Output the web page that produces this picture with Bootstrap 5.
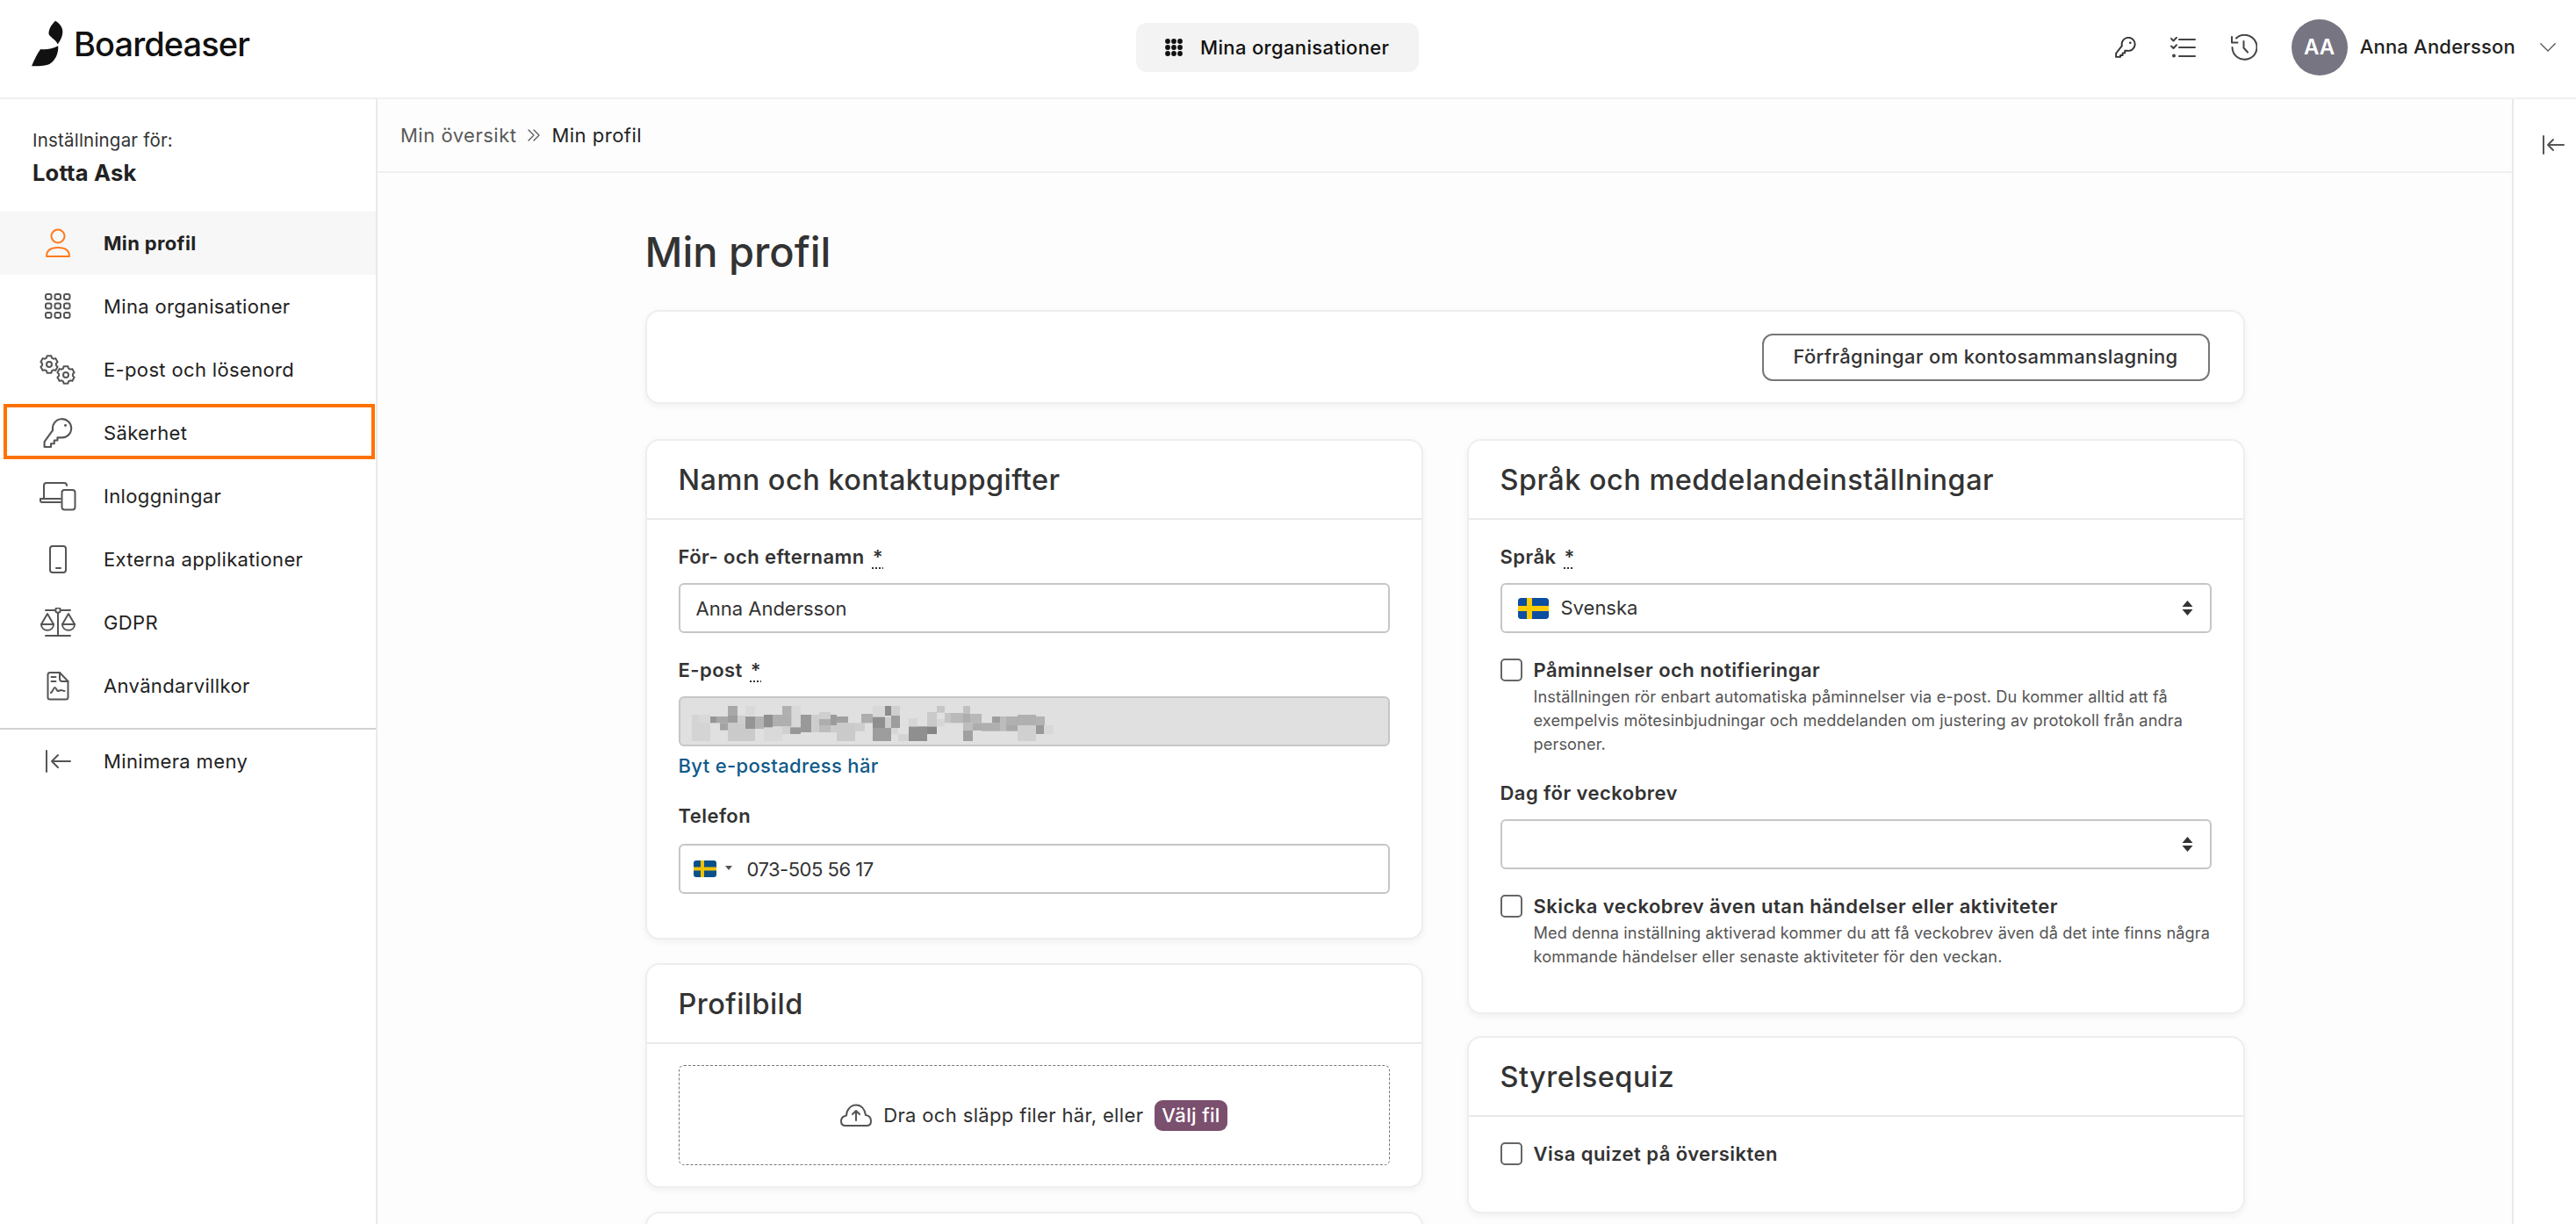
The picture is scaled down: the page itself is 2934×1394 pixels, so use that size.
<!DOCTYPE html>
<html lang="sv">
<head>
<meta charset="utf-8">
<title>Min profil</title>
<link href="https://cdn.jsdelivr.net/npm/bootstrap@5.3.0/dist/css/bootstrap.min.css" rel="stylesheet">
<style>
html,body{height:100%;overflow:hidden}
body{font-family:Inter,"Noto Sans",sans-serif;font-size:22px;color:#2f2f2f;background:#fff;letter-spacing:.35px}
.app-top{height:113px;border-bottom:2px solid #f0f0f0;background:#fff;flex:none}
.brand-box{flex:0 0 1294px;padding:0 0 12px 35px;gap:11px}
.brand-name{font-size:38px;font-weight:500;letter-spacing:-.9px;color:#111;line-height:1}
.org-btn{width:322px;height:56px;background:#f3f3f3;border:0;border-radius:12px;font-size:22px;font-weight:500;color:#111;gap:20px;padding:0 0 0 33px;margin-top:-3px;letter-spacing:.35px}
.top-tools{margin-left:auto;padding:0 23px 4px 0;height:100%}
.tool-ico{display:block;color:#333}
.avatar-dot{width:64px;height:64px;border-radius:50%;background:#787582;color:#fff;font-weight:600;font-size:24px;letter-spacing:0}
.user-name{font-weight:500;font-size:22px;color:#222;margin-left:14px;margin-right:28px;letter-spacing:.2px}
.side-nav{width:430px;flex:none;border-right:2px solid #e9e9e9;background:#fff}
.side-head{padding:32px 0 0 37px;height:128px}
.side-sub{font-size:20.5px;line-height:30px;color:#333;letter-spacing:.2px}
.side-who{font-size:25.5px;font-weight:700;line-height:36px;margin-top:4px;color:#222;letter-spacing:.2px}
.side-link{position:relative;height:72px;color:#222;text-decoration:none;padding:0}
.side-link .ico-slot{width:118px;flex:none;display:flex;justify-content:center;padding-left:14px}
.side-link.is-current{background:#f7f7f7;font-weight:700}
.side-link.is-focus::after{content:"";position:absolute;left:4px;right:1px;top:3px;height:63px;border:4px solid #ff7200;pointer-events:none}
.side-rule{margin:12px 0 0;border:0;border-top:2px solid #d2d2d2;opacity:1}
.ico{fill:none;stroke:#555;stroke-width:2;stroke-linecap:round;stroke-linejoin:round}
.main-area{background:#fdfdfd;min-width:0}
.crumb-bar{height:84px;border-bottom:2px solid #f0f0f0;padding-left:26px;flex:none;letter-spacing:.5px}
.crumb-bar .breadcrumb{margin:0}
.crumb-muted{color:#5a5a5a}
.crumb-sep{margin:0 13px;display:flex}
.crumb-now{color:#222}
.page-wrap{width:1822px;margin:0 auto}
.page-title{font-size:47px;font-weight:500;line-height:60px;margin:60px 0 36px;color:#333;letter-spacing:0}
.soft-card{border:2px solid #eeeeee;border-radius:16px;box-shadow:0 3px 8px rgba(0,0,0,.05);background:#fff;--bs-card-bg:#fff}
.top-strip{height:107px;padding-right:38px;margin-bottom:40px}
.merge-btn{height:54px;width:510px;border:2px solid #777;border-radius:12px;background:#fff;color:#333;font-size:22px;font-weight:500;padding:0;letter-spacing:.35px}
.two-col{--bs-gutter-x:50px}
.soft-card .card-header{height:90px;background:#fff;border-bottom:2px solid #e9e9e9;padding:0 36px;display:flex;align-items:center;border-radius:16px 16px 0 0}
.card-ttl{font-size:32.5px;font-weight:500;margin:0;color:#333;line-height:1.2;letter-spacing:.45px}
.soft-card .card-body{padding:27px 36px 50px}
.stack-gap{margin-bottom:27px}
.form-label{font-weight:600;line-height:30px;margin-bottom:15px;color:#333;display:block;letter-spacing:.45px}
.form-label.phone-lbl{margin-bottom:17px}
.req-mark{text-decoration:underline dotted;text-underline-offset:4px;margin-left:3px}
.form-control,.form-select{height:57px;font-size:22px;color:#333;border:2px solid #c6c6c6;border-radius:6px;padding:0 18px;background-color:#fff}
.form-select{background-image:url("data:image/svg+xml,%3csvg xmlns='http://www.w3.org/2000/svg' viewBox='0 0 13 17'%3e%3cpath fill='%23333' d='M6.500 0l6 7H.5zM6.500 17l6-7H.5z'/%3e%3c/svg%3e");background-position:right 19px center;background-size:13px 17px}
.form-select.flag-pad{padding-left:67px}
.form-control.phone-pad{padding-left:76px;letter-spacing:-.5px}
.mail-locked,.mail-locked:disabled{background:#e0e0e0;border-color:#c6c6c6;opacity:1}
.mosaic-veil{position:absolute;left:7px;top:2px;pointer-events:none}
.flag-over{position:absolute;pointer-events:none;border-radius:3px}
.change-link{display:block;color:#0f5a8a;text-decoration:none;line-height:30px;margin-top:7px;font-weight:500}
.caret-mini{position:absolute;left:53px;top:25px;width:0;height:0;border-left:4px solid transparent;border-right:4px solid transparent;border-top:5px solid #555}
.tick-row{display:flex;gap:13px;min-height:30px}
.form-check-input.tick-box{width:25px;height:26px;border:2px solid #666;border-radius:5px;margin:2px 0 0;flex:none;box-shadow:none}
.tick-lbl{font-weight:600;line-height:30px;color:#333;letter-spacing:.45px}
.tick-note{font-size:18.2px;line-height:27px;color:#555;margin:2px 0 0;letter-spacing:.1px}
.drop-zone{height:114px;border:1px dashed #777;border-radius:6px;gap:13px}
.pick-file{background:#7b4f6e;color:#fff;border-radius:9px;padding:0 8px;height:35px;font-weight:500;line-height:35px}
.rail-right{width:73px;flex:none;border-left:2px solid #e9e9e9;background:#fff;padding:41px 0 0 18px}
.body-row{min-height:0}
.spare-card{height:200px}
.side-gap-a{margin-bottom:27px}
.side-gap-b{margin-bottom:25px}
.tools-key{margin-right:38px}
.tools-list{margin-right:40px}
.tools-hist{margin-right:39px}
.drop-body{padding-top:24px!important;padding-bottom:24px!important}
.quiz-body{padding-bottom:51px!important}
.ico-dark{stroke:#333;stroke-width:2.6}
.ico-mid{stroke:#444}
.ico-thin{stroke-width:1.3}
.ico-orange{stroke:#ff7a1a}
.flag-phone{left:17px;top:19px}
.flag-lang{left:20px;top:17px}
</style>
</head>
<body class="d-flex flex-column">

<header class="app-top d-flex align-items-center">
  <div class="brand-box d-flex align-items-center">
    <svg width="38" height="55" viewBox="102 58 112 160" aria-hidden="true" fill="#111">
      <path d="M185 62C170 75 160 95 163 108 170 120 190 128 192 141 205 125 212 105 208 90 205 78 195 68 185 62Z"/>
      <path d="M105 214C115 190 125 170 135 157 155 160 175 155 194 146 196 170 185 195 165 207 150 214 125 214 105 214Z"/>
    </svg>
    <span class="brand-name">Boardeaser</span>
  </div>
  <button type="button" class="btn org-btn d-flex align-items-center">
    <svg width="20" height="20" viewBox="0 0 20 20" fill="#111" aria-hidden="true"><circle cx="3" cy="3" r="2.9"/><circle cx="10" cy="3" r="2.9"/><circle cx="17" cy="3" r="2.9"/><circle cx="3" cy="10" r="2.9"/><circle cx="10" cy="10" r="2.9"/><circle cx="17" cy="10" r="2.9"/><circle cx="3" cy="17" r="2.9"/><circle cx="10" cy="17" r="2.9"/><circle cx="17" cy="17" r="2.9"/></svg>
    <span>Mina organisationer</span>
  </button>
  <div class="top-tools d-flex align-items-center">
    <svg class="tool-ico tools-key" width="24" height="24" viewBox="0 0 32 32" aria-hidden="true"><path class="ico ico-dark" d="M10.5 13.5A10 10 0 1 1 18.5 21H15v3.5h-3.5V28H8v2.5H1.500V25Z"/><circle cx="23" cy="9" r="1.700" fill="#333"/></svg>
    <svg class="tool-ico tools-list" width="30" height="24" viewBox="0 0 30 24" aria-hidden="true"><path class="ico ico-mid" d="M11 3h18M11 12h18M11 22h18M2 2l2.500 2.500L8 0.800M2 10.500l2.500 2.500L8 9.300"/><circle cx="5" cy="21.500" r="2" fill="#444"/></svg>
    <svg class="tool-ico tools-hist" width="30" height="30" viewBox="0 0 30 30" aria-hidden="true"><path class="ico ico-mid" d="M6 4.500A14 14 0 1 1 1.500 15M1 3v6.500h6.500M14.500 8v7.500l4.500 5"/></svg>
    <div class="avatar-dot d-flex align-items-center justify-content-center">AA</div>
    <span class="user-name">Anna Andersson</span>
    <svg width="18" height="10" viewBox="0 0 18 10" aria-hidden="true"><path class="ico ico-thin" d="M.8.800 9 9 17.200.800"/></svg>
  </div>
</header>

<div class="d-flex flex-grow-1 body-row overflow-hidden">
  <nav class="side-nav">
    <div class="side-head">
      <div class="side-sub">Inställningar för:</div>
      <div class="side-who">Lotta Ask</div>
    </div>
    <div class="d-flex flex-column">
      <a href="#" class="side-link is-current d-flex align-items-center"><span class="ico-slot"><svg width="30" height="34" viewBox="0 0 30 34" aria-hidden="true"><g class="ico ico-orange"><circle cx="15" cy="9" r="7.500"/><path d="M2 32c0-7 5-10 13-10s13 3 13 10Z"/></g></svg></span>Min profil</a>
      <a href="#" class="side-link d-flex align-items-center"><span class="ico-slot"><svg width="30" height="30" viewBox="0 0 30 30" aria-hidden="true"><g class="ico"><rect x="1" y="1" width="6.500" height="6" rx="2"/><rect x="11.500" y="1" width="6.500" height="6" rx="2"/><rect x="22" y="1" width="6.500" height="6" rx="2"/><rect x="1" y="11.500" width="6.500" height="6" rx="2"/><rect x="11.500" y="11.500" width="6.500" height="6" rx="2"/><rect x="22" y="11.500" width="6.500" height="6" rx="2"/><rect x="1" y="22" width="6.500" height="6" rx="2"/><rect x="11.500" y="22" width="6.500" height="6" rx="2"/><rect x="22" y="22" width="6.500" height="6" rx="2"/></g></svg></span>Mina organisationer</a>
      <a href="#" class="side-link d-flex align-items-center"><span class="ico-slot"><svg width="42" height="36" viewBox="0 0 42 36" aria-hidden="true"><defs><g id="cog"><polygon points="-2.400,-9.700 2.400,-9.700 3,-7.400 4.900,-6.300 7.200,-6.900 9.600,-2.800 7.900,-1.100 7.900,1.100 9.600,2.800 7.200,6.900 4.900,6.300 3,7.400 2.400,9.700 -2.400,9.700 -3,7.400 -4.900,6.300 -7.200,6.900 -9.600,2.800 -7.900,1.100 -7.900,-1.100 -9.600,-2.800 -7.200,-6.900 -4.900,-6.300 -3,-7.400"/><circle r="3"/></g></defs><g class="ico"><use href="#cog" transform="translate(11 12)"/><use href="#cog" transform="translate(30 24)"/></g></svg></span>E-post och lösenord</a>
      <a href="#" class="side-link is-focus d-flex align-items-center"><span class="ico-slot"><svg width="34" height="34" viewBox="0 0 32 32" aria-hidden="true"><path class="ico" d="M10.500 13A10 10 0 1 1 19 21H15.500v3H12v3.500H8.500V31H1.500V25.500Z"/><circle cx="24" cy="8" r="1.400" fill="#555"/></svg></span>Säkerhet</a>
      <a href="#" class="side-link d-flex align-items-center"><span class="ico-slot"><svg width="42" height="34" viewBox="0 0 42 34" aria-hidden="true"><g class="ico"><path d="M5 20V5q0-3 3-3h20q3 0 3 3"/><path d="M24 24H3q-2 0-2-2v-2h23"/><rect x="25.500" y="10" width="15" height="22.500" rx="3"/></g></svg></span>Inloggningar</a>
      <a href="#" class="side-link d-flex align-items-center"><span class="ico-slot"><svg width="22" height="34" viewBox="0 0 22 34" aria-hidden="true"><g class="ico"><rect x="2" y="2" width="18" height="30" rx="3"/><path d="M9 27h5"/></g></svg></span>Externa applikationer</a>
      <a href="#" class="side-link d-flex align-items-center"><span class="ico-slot"><svg width="42" height="34" viewBox="0 0 42 34" aria-hidden="true"><g class="ico"><path d="M7 3h10M25 3h10M21 6v26M7 32h28"/><circle cx="21" cy="3" r="2.800"/><path d="M9 7 2 19h14ZM33 7l-7 12h14Z"/><path d="M2 19c0 9 14 9 14 0M26 19c0 9 14 9 14 0"/></g></svg></span>GDPR</a>
      <a href="#" class="side-link d-flex align-items-center"><span class="ico-slot"><svg width="26" height="34" viewBox="0 0 26 34" aria-hidden="true"><g class="ico"><path d="M15 2H4Q1.500 2 1.500 4.500v26q0 2 2.500 2h18q2.500 0 2.500-2.500V12Z"/><path d="M15 2v7q0 3 3 3h6.500M5.500 7h5M5.500 12h5M5 25c2-1 3-6 4.500-6s2 4 3.500 4 2-1 3.500-1 2 1 4 1"/></g></svg></span>Användarvillkor</a>
    </div>
    <hr class="side-rule">
    <a href="#" class="side-link d-flex align-items-center"><span class="ico-slot"><svg width="30" height="26" viewBox="0 0 30 26" aria-hidden="true"><path class="ico" d="M2 1v24M29 13H8M15 6l-7 7 7 7"/></svg></span>Minimera meny</a>
  </nav>

  <main class="main-area flex-grow-1 d-flex flex-column overflow-hidden">
    <div class="crumb-bar d-flex align-items-center">
      <ol class="breadcrumb align-items-center">
        <li class="crumb-muted">Min översikt</li>
        <li class="crumb-sep"><svg width="14" height="14" viewBox="0 0 14 14" aria-hidden="true"><path class="ico ico-thin" d="M1 1l6 6-6 6M7 1l6 6-6 6"/></svg></li>
        <li class="crumb-now">Min profil</li>
      </ol>
    </div>
    <div class="page-wrap">
      <h1 class="page-title">Min profil</h1>
      <div class="card soft-card top-strip d-flex flex-row align-items-center justify-content-end">
        <button type="button" class="btn merge-btn">Förfrågningar om kontosammanslagning</button>
      </div>
      <div class="row two-col">
        <div class="col-6">
          <div class="card soft-card side-gap-a">
            <div class="card-header"><h2 class="card-ttl">Namn och kontaktuppgifter</h2></div>
            <div class="card-body">
              <div class="stack-gap">
                <label class="form-label">För- och efternamn <span class="req-mark">*</span></label>
                <input class="form-control" value="Anna Andersson">
              </div>
              <div class="stack-gap">
                <label class="form-label">E-post <span class="req-mark">*</span></label>
                <div class="position-relative">
                  <input class="form-control mail-locked" disabled>
                  <svg class="mosaic-veil" width="430" height="55" viewBox="0 0 1290 165" aria-hidden="true">
                    <rect x="24" y="57" width="63" height="90" fill="#d4d4d4"/><rect x="48" y="57" width="39" height="28" fill="#d9d9d9"/><rect x="87" y="63" width="21" height="22" fill="#959595"/><rect x="108" y="63" width="39" height="22" fill="#a8a8a8"/><rect x="120" y="85" width="27" height="25" fill="#a3a3a3"/><rect x="147" y="27" width="33" height="33" fill="#a8a8a8"/><rect x="147" y="60" width="33" height="25" fill="#9d9d9d"/><rect x="147" y="85" width="93" height="62" fill="#cacaca"/><rect x="180" y="60" width="27" height="25" fill="#cdcdcd"/><rect x="207" y="27" width="33" height="33" fill="#d9d9d9"/><rect x="207" y="63" width="33" height="42" fill="#959595"/><rect x="240" y="63" width="30" height="42" fill="#b3b3b3"/><rect x="270" y="100" width="63" height="47" fill="#d9d9d9"/><rect x="300" y="57" width="65" height="40" fill="#afafaf"/><rect x="270" y="57" width="30" height="43" fill="#8f8f8f"/><rect x="333" y="27" width="32" height="30" fill="#b0b0b0"/><rect x="333" y="97" width="27" height="26" fill="#d0d0d0"/><rect x="365" y="27" width="31" height="73" fill="#d8d8d8"/><rect x="360" y="100" width="36" height="23" fill="#989898"/><rect x="396" y="57" width="36" height="60" fill="#999"/><rect x="432" y="57" width="27" height="60" fill="#cdcdcd"/><rect x="459" y="48" width="39" height="24" fill="#cfcfcf"/><rect x="459" y="72" width="39" height="21" fill="#adadad"/><rect x="459" y="93" width="39" height="24" fill="#bcbcbc"/><rect x="498" y="57" width="21" height="36" fill="#9b9b9b"/><rect x="519" y="63" width="39" height="22" fill="#a0a0a0"/><rect x="498" y="93" width="21" height="24" fill="#cbcbcb"/><rect x="519" y="85" width="63" height="62" fill="#cacaca"/><rect x="582" y="85" width="33" height="28" fill="#cdcdcd"/><rect x="603" y="54" width="39" height="31" fill="#adadad"/><rect x="642" y="27" width="42" height="38" fill="#d8d8d8"/><rect x="642" y="65" width="42" height="37" fill="#8f8f8f"/><rect x="642" y="102" width="63" height="45" fill="#9d9d9d"/><rect x="684" y="27" width="21" height="33" fill="#8b8b8b"/><rect x="684" y="65" width="21" height="37" fill="#cdcdcd"/><rect x="705" y="27" width="30" height="33" fill="#cfcfcf"/><rect x="705" y="60" width="30" height="42" fill="#9d9d9d"/><rect x="705" y="102" width="24" height="21" fill="#d6d6d6"/><rect x="729" y="123" width="36" height="24" fill="#d3d3d3"/><rect x="765" y="97" width="63" height="50" fill="#8f8f8f"/><rect x="765" y="69" width="30" height="28" fill="#d6d6d6"/><rect x="828" y="97" width="33" height="26" fill="#858585"/><rect x="828" y="48" width="33" height="49" fill="#c9c9c9"/><rect x="861" y="27" width="27" height="23" fill="#c6c6c6"/><rect x="861" y="72" width="27" height="25" fill="#d6d6d6"/><rect x="888" y="51" width="21" height="34" fill="#c4c4c4"/><rect x="909" y="51" width="42" height="34" fill="#b9b9b9"/><rect x="951" y="27" width="24" height="27" fill="#c0c0c0"/><rect x="951" y="54" width="24" height="31" fill="#aeaeae"/><rect x="951" y="85" width="33" height="26" fill="#bdbdbd"/><rect x="951" y="111" width="33" height="36" fill="#a0a0a0"/><rect x="975" y="54" width="39" height="31" fill="#b8b8b8"/><rect x="984" y="85" width="30" height="26" fill="#adadad"/><rect x="1014" y="85" width="63" height="28" fill="#afafaf"/><rect x="1050" y="63" width="27" height="22" fill="#9d9d9d"/><rect x="1077" y="63" width="21" height="50" fill="#bcbcbc"/><rect x="1098" y="63" width="39" height="30" fill="#b0b0b0"/><rect x="1098" y="93" width="39" height="20" fill="#a9a9a9"/><rect x="1137" y="57" width="63" height="36" fill="#b0b0b0"/><rect x="1200" y="63" width="30" height="30" fill="#b3b3b3"/><rect x="1137" y="93" width="63" height="54" fill="#d0d0d0"/><rect x="1200" y="93" width="27" height="30" fill="#999"/><rect x="1227" y="93" width="33" height="30" fill="#d8d8d8"/>
                  </svg>
                </div>
                <a href="#" class="change-link">Byt e-postadress här</a>
              </div>
              <div>
                <label class="form-label phone-lbl">Telefon</label>
                <div class="position-relative">
                  <input class="form-control phone-pad" value="073-505 56 17">
                  <svg class="flag-over flag-phone" width="26" height="19" viewBox="0 0 26 19" aria-hidden="true"><rect width="26" height="19" fill="#0a5189"/><rect x="8" width="4" height="19" fill="#efc100"/><rect y="7.500" width="26" height="4" fill="#efc100"/></svg>
                  <span class="caret-mini"></span>
                </div>
              </div>
            </div>
          </div>
          <div class="card soft-card side-gap-a">
            <div class="card-header"><h2 class="card-ttl">Profilbild</h2></div>
            <div class="card-body drop-body">
              <div class="drop-zone d-flex align-items-center justify-content-center">
                <svg width="36" height="26" viewBox="0 0 36 26" aria-hidden="true"><g class="ico"><path d="M9 25H6q-5 0-5-5c0-4 3-6 6-6.500C7 7 12 1.500 18 1.500S28 6 29 13c4 .5 6 3 6 7q0 5-5 5Z"/><path d="M18 19V8M14 12l4-4 4 4"/></g></svg>
                <span>Dra och släpp filer här, eller</span>
                <span class="pick-file">Välj fil</span>
              </div>
            </div>
          </div>
          <div class="card soft-card spare-card"></div>
        </div>
        <div class="col-6">
          <div class="card soft-card side-gap-b">
            <div class="card-header"><h2 class="card-ttl">Språk och meddelandeinställningar</h2></div>
            <div class="card-body">
              <div class="stack-gap">
                <label class="form-label">Språk <span class="req-mark">*</span></label>
                <div class="position-relative">
                  <select class="form-select flag-pad"><option>Svenska</option></select>
                  <svg class="flag-over flag-lang" width="35" height="24" viewBox="0 0 35 24" aria-hidden="true"><rect width="35" height="24" rx="3" fill="#0b4ea2"/><rect x="10" width="6" height="24" fill="#fecb00"/><rect y="9" width="35" height="6" fill="#fecb00"/></svg>
                </div>
              </div>
              <div class="tick-row stack-gap">
                <input class="form-check-input tick-box" type="checkbox">
                <div>
                  <div class="tick-lbl">Påminnelser och notifieringar</div>
                  <p class="tick-note">Inställningen rör enbart automatiska påminnelser via e-post. Du kommer alltid att få exempelvis mötesinbjudningar och meddelanden om justering av protokoll från andra personer.</p>
                </div>
              </div>
              <div class="stack-gap">
                <label class="form-label">Dag för veckobrev</label>
                <select class="form-select"><option></option></select>
              </div>
              <div class="tick-row">
                <input class="form-check-input tick-box" type="checkbox">
                <div>
                  <div class="tick-lbl">Skicka veckobrev även utan händelser eller aktiviteter</div>
                  <p class="tick-note">Med denna inställning aktiverad kommer du att få veckobrev även då det inte finns några kommande händelser eller senaste aktiviteter för den veckan.</p>
                </div>
              </div>
            </div>
          </div>
          <div class="card soft-card">
            <div class="card-header"><h2 class="card-ttl">Styrelsequiz</h2></div>
            <div class="card-body quiz-body">
              <div class="tick-row">
                <input class="form-check-input tick-box" type="checkbox">
                <div class="tick-lbl">Visa quizet på översikten</div>
              </div>
            </div>
          </div>
        </div>
      </div>
    </div>
  </main>

  <aside class="rail-right d-flex justify-content-center">
    <svg width="26" height="22" viewBox="0 0 26 22" aria-hidden="true"><path class="ico" d="M2 1v20M25 11H7M13 5l-6 6 6 6"/></svg>
  </aside>
</div>
</body>
</html>
